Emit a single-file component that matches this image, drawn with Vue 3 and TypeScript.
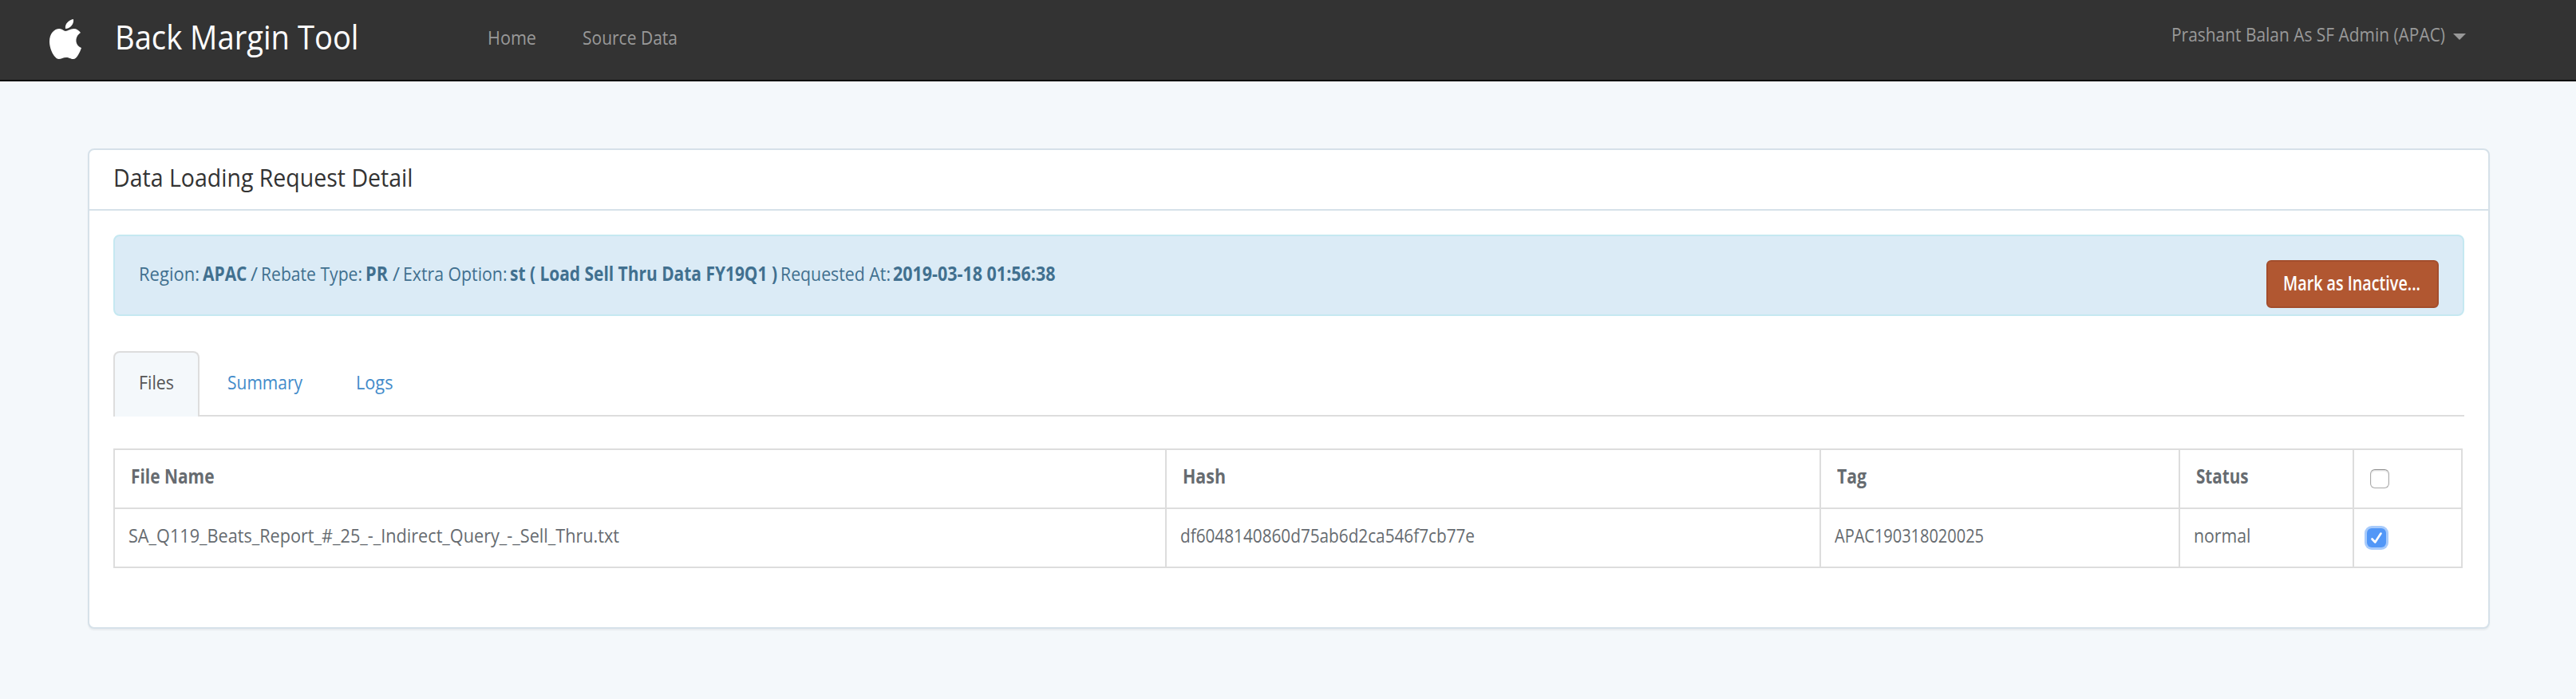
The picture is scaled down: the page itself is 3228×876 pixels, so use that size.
<script setup lang="ts">
import { ref } from 'vue'

interface Segment { text: string; width: number; gap: number; strong?: boolean }
interface Column { key: 'name' | 'hash' | 'tag' | 'status'; label: string; width: number }

// Condenses a label horizontally so that it takes exactly the given width.
const vFit = {
  mounted(el: HTMLElement, binding: { value: number }) {
    const natural = el.getBoundingClientRect().width
    el.style.width = `${binding.value}px`
    el.style.transform = `scaleX(${binding.value / natural})`
  },
}

const segments: Segment[] = [
  { text: 'Region:', width: 76, gap: 4 },
  { text: 'APAC', width: 55.5, gap: 4.5 },
  { text: '/', width: 9, gap: 4 },
  { text: 'Rebate Type:', width: 127, gap: 4 },
  { text: 'PR', width: 28, gap: 5.5 },
  { text: '/', width: 9, gap: 4 },
  { text: 'Extra Option:', width: 130.5, gap: 3.5 },
  { text: 'st ( Load Sell Thru Data FY19Q1 )', width: 335, gap: 4 },
  { text: 'Requested At:', width: 138, gap: 3.5 },
  { text: '2019-03-18 01:56:38', width: 203.5, gap: 0 },
].map((s, i) => ({ ...s, strong: [1, 4, 7, 9].includes(i) }))

const tabs = [
  { label: 'Files', width: 44 },
  { label: 'Summary', width: 94 },
  { label: 'Logs', width: 46.5 },
]
const activeTab = ref('Files')

const columns: Column[] = [
  { key: 'name', label: 'File Name', width: 104.5 },
  { key: 'hash', label: 'Hash', width: 54 },
  { key: 'tag', label: 'Tag', width: 37 },
  { key: 'status', label: 'Status', width: 65.5 },
]
const file = {
  name: { text: 'SA_Q119_Beats_Report_#_25_-_Indirect_Query_-_Sell_Thru.txt', width: 615 },
  hash: { text: 'df6048140860d75ab6d2ca546f7cb77e', width: 369 },
  tag: { text: 'APAC190318020025', width: 187 },
  status: { text: 'normal', width: 71.5 },
}
const allSelected = ref(false)
const selected = ref(true)
</script>

<template>
  <div class="page">
    <header class="navbar">
      <svg class="logo" viewBox="0 0 40 50" width="40" height="50">
        <path fill="#fff" d="M30 0C31 6 26 12 20 12C19 6 24 1 30 0ZM20 15C23 15 26 12 30.500 12C34 12 37 14 39 17C31 22 32 33 40 36C38 42 34 50 30 50C26 50 25 48 21 48C17 48 15 50 11.500 50C7 50 0 39 0 28C0 18 6 12 12.500 12C16 12 18 15 20 15Z" />
      </svg>
      <div class="brand"><span v-fit="305.500" class="fit">Back Margin Tool</span></div>
      <nav class="menu">
        <a class="home"><span v-fit="61" class="fit">Home</span></a>
        <a><span v-fit="119" class="fit">Source Data</span></a>
      </nav>
      <div class="user">
        <span v-fit="343" class="fit">Prashant Balan As SF Admin (APAC)</span>
        <i class="caret" />
      </div>
    </header>

    <main class="panel">
      <h1 class="panel-title"><span v-fit="375.500" class="fit">Data Loading Request Detail</span></h1>
      <div class="panel-body">
        <section class="alert">
          <p class="summary">
            <span v-for="(s, i) in segments" :key="i" class="segment" :style="{ marginRight: s.gap + 'px' }">
              <span v-fit="s.width" class="fit" :class="{ strong: s.strong }">{{ s.text }}</span>
            </span>
          </p>
          <button class="inactive"><span v-fit="172" class="fit">Mark as Inactive...</span></button>
        </section>

        <div class="tabs">
          <a v-for="t in tabs" :key="t.label" class="tab" :class="{ active: t.label === activeTab }" @click="activeTab = t.label">
            <span v-fit="t.width" class="fit">{{ t.label }}</span>
          </a>
        </div>

        <table class="files">
          <colgroup>
            <col class="c-name"><col class="c-hash"><col class="c-tag"><col class="c-status"><col class="c-check">
          </colgroup>
          <thead>
            <tr>
              <th v-for="c in columns" :key="c.key"><span v-fit="c.width" class="fit">{{ c.label }}</span></th>
              <th class="check"><span class="box" :class="{ on: allSelected }" @click="allSelected = !allSelected" /></th>
            </tr>
          </thead>
          <tbody>
            <tr>
              <td v-for="c in columns" :key="c.key"><span v-fit="file[c.key].width" class="fit">{{ file[c.key].text }}</span></td>
              <td class="check">
                <span class="box" :class="{ on: selected }" @click="selected = !selected">
                  <svg v-if="selected" viewBox="0 0 24 24" width="24" height="24">
                    <path d="M6.500 13.500L10.300 17.500L17.500 6.500" fill="none" stroke="#fff" stroke-width="2.600" stroke-linecap="round" stroke-linejoin="round" />
                  </svg>
                </span>
              </td>
            </tr>
          </tbody>
        </table>
      </div>
    </main>
  </div>
</template>

<style>
body { margin: 0; background: #f4f8fb; }
</style>

<style scoped>
* { box-sizing: border-box; }
.page {
  height: 876px;
  background: #f4f8fb;
  font: 24.500px/32px "Open Sans", "Noto Sans", sans-serif;
  color: #666b70;
  overflow: hidden;
}
.fit { display: inline-block; white-space: nowrap; transform-origin: left center; }
.navbar {
  height: 102px;
  display: flex;
  align-items: flex-start;
  padding-left: 62px;
  background: #333;
  border-bottom: 2px solid #080808;
  color: #999;
}
.logo { margin-top: 24px; flex: none; }
.brand { width: 468px; padding: 16px 0 0 42px; font-size: 42.500px; line-height: 60px; color: #fff; }
.menu { display: flex; padding-top: 31px; margin-left: 41px; }
.home { margin-right: 58px; }
.user { display: flex; margin-left: auto; margin-right: 138px; padding-top: 27px; }
.caret { margin: 15px 0 0 10px; border: 8px solid transparent; border-top-color: #999; border-bottom: 0; height: 0; }
.panel {
  width: 3010px;
  height: 602px;
  margin: 84px 0 0 110px;
  background: #fff;
  border: 2px solid #d6e1e9;
  border-radius: 8px;
  box-shadow: 0 2px 2px rgba(0, 0, 0, .05);
}
.panel-title {
  height: 76px;
  margin: 0;
  padding: 14px 0 0 30px;
  border-bottom: 2px solid #d6e1e9;
  font-size: 31px;
  font-weight: 400;
  line-height: 40px;
  color: #333;
}
.panel-body { padding: 30px; }
.alert {
  height: 102px;
  display: flex;
  justify-content: space-between;
  padding: 30px;
  border: 2px solid #c5e8f1;
  border-radius: 8px;
  background: #dbebf6;
  color: #41708f;
}
.summary { display: flex; margin: 0; padding-top: 1px; }
.strong { font-weight: 700; }
.inactive {
  width: 216px;
  height: 60px;
  padding: 0 0 2px 19px;
  border: 2px solid #a34d2c;
  border-radius: 6px;
  background: #b15731;
  color: #fff;
  font: 600 24.500px/32px "Open Sans", "Noto Sans", sans-serif;
  text-align: left;
}
.tabs { height: 82px; display: flex; gap: 4px; margin: 44px 0 40px; box-shadow: inset 0 -2px #ddd; }
.tab { padding: 21px 31px 0 28.500px; border: 2px solid transparent; border-bottom: 0; color: #428bca; }
.active { width: 108px; padding: 21px 30px 0; background: #f4f8fb; border-color: #ddd; border-radius: 8px 8px 0 0; color: #555; }
.files { width: 2944px; table-layout: fixed; border-collapse: collapse; }
.c-name { width: 1318px; }
.c-hash { width: 820px; }
.c-tag { width: 450px; }
.c-status { width: 218px; }
.c-check { width: 136px; }
th, td { height: 74px; padding: 17px 0 0 17px; border: 2px solid #ddd; text-align: left; vertical-align: top; }
th { padding-left: 20px; }
.check { padding-top: 24px; line-height: 0; }
td.check { padding-left: 16px; }
.box {
  display: inline-block;
  width: 24px;
  height: 24px;
  border: 1px solid #aaa;
  border-top-color: #909090;
  border-radius: 6px;
  background: #fff;
  box-shadow: inset 0 1px 2px rgba(0, 0, 0, .18);
}
.box.on { border: 0; background: #5297f7; box-shadow: 0 0 0 3px #a8cbfb; }
</style>
